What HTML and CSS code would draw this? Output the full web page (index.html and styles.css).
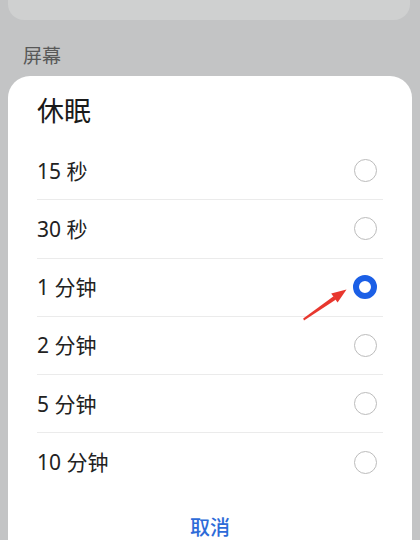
FILE: index.html
```html
<!DOCTYPE html>
<html lang="zh">
<head>
<meta charset="utf-8">
<title>休眠</title>
<link rel="stylesheet" href="styles.css">
</head>
<body>
<div class="page">
  <div class="top-card"></div>
  <div class="section-label">屏幕</div>
  <div class="sheet">
    <div class="title">休眠</div>
    <ul class="options">
      <li class="option"><span class="label">15 秒</span><span class="radio"></span></li>
      <li class="option"><span class="label">30 秒</span><span class="radio"></span></li>
      <li class="option"><span class="label">1 分钟</span><span class="radio checked"></span></li>
      <li class="option"><span class="label">2 分钟</span><span class="radio"></span></li>
      <li class="option"><span class="label">5 分钟</span><span class="radio"></span></li>
      <li class="option last"><span class="label">10 分钟</span><span class="radio"></span></li>
    </ul>
    <div class="cancel">取消</div>
  </div>
  <svg class="arrow" width="420" height="540" viewBox="0 0 420 540" aria-hidden="true">
    <polygon points="304,320.5 336,299.6 333.6,296.2 303.2,318.6" fill="#e8372e"/>
    <polygon points="346.5,289.5 337.6,302.4 331.2,293.4" fill="#e8372e"/>
  </svg>
</div>
</body>
</html>
```

FILE: styles.css
```css
html, body {
  margin: 0;
  padding: 0;
}
body {
  background: #c3c4c5;
  font-family: "Noto Sans", "Noto Sans CJK SC", sans-serif;
  color: #1f1f1f;
}
.page {
  position: relative;
  width: 420px;
  height: 540px;
  display: flex;
  flex-direction: column;
  overflow: hidden;
}
.top-card {
  height: 20px;
  margin: 0 10px 0 8px;
  background: #cfd0d0;
  border-radius: 0 0 16px 16px;
  flex: none;
}
.section-label {
  margin: 26px 0 10px;
  padding-left: 23px;
  font-size: 19px;
  line-height: 20px;
  color: #585858;
  flex: none;
}
.sheet {
  flex: 1;
  margin: 0 8px;
  background: #ffffff;
  border-radius: 22px 22px 0 0;
  padding: 0 29px;
  display: flex;
  flex-direction: column;
}
.title {
  padding: 20px 0 16px;
  font-size: 27px;
  line-height: 30px;
  font-weight: 400;
  color: #1a1a1a;
}
.options {
  list-style: none;
  margin: 0;
  padding: 0;
}
.option {
  height: 57.25px;
  border-bottom: 1px solid #ebebeb;
  display: flex;
  align-items: center;
  justify-content: space-between;
  padding-right: 6px;
}
.option.last {
  border-bottom: none;
  height: 58.25px;
}
.label {
  font-size: 21px;
  line-height: 24px;
  color: #222222;
}
.radio {
  width: 21px;
  height: 21px;
  border: 1.6px solid #bcbcbc;
  border-radius: 50%;
  box-sizing: content-box;
}
.radio.checked {
  width: 12px;
  height: 12px;
  border: 6px solid #1b5fe6;
}
.cancel {
  padding-top: 24px;
  text-align: center;
  font-size: 20px;
  line-height: 24px;
  font-weight: 500;
  color: #2d6bd8;
}
.arrow {
  position: absolute;
  left: 0;
  top: 0;
  pointer-events: none;
}
```
